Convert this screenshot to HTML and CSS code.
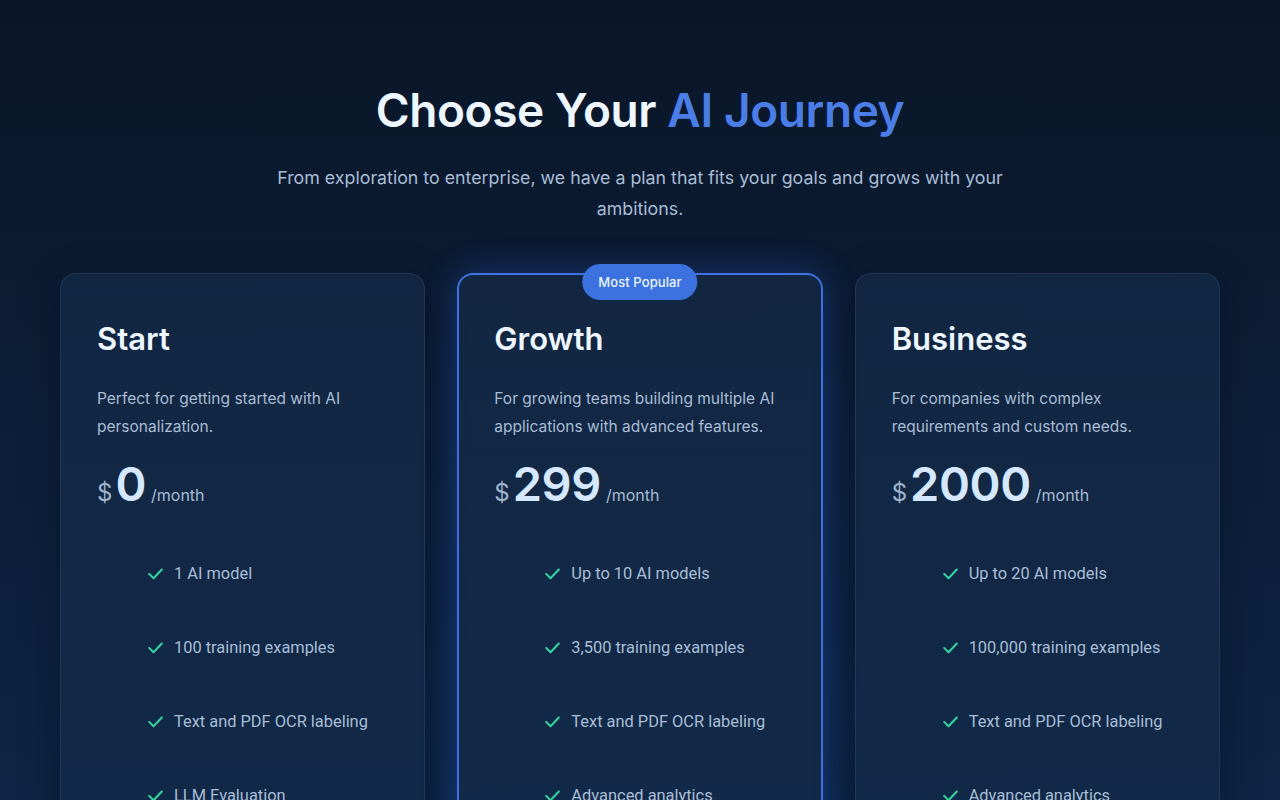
FILE: index.html
```html
<!DOCTYPE html>
<html lang="en">
<head>
<meta charset="utf-8">
<title>Pricing</title>
<link rel="stylesheet" href="styles.css">
</head>
<body>
<section class="pricing">
  <header class="intro">
    <h1 class="title">Choose Your <span class="accent">AI Journey</span></h1>
    <p class="subtitle">From exploration to enterprise, we have a plan that fits your goals and grows with your ambitions.</p>
  </header>
  <div class="plans">
    <article class="card">
      <h2 class="plan-name">Start</h2>
      <p class="plan-desc">Perfect for getting started with AI personalization.</p>
      <div class="price"><span class="cur">$</span><span class="amount">0</span><span class="per">/month</span></div>
      <ul class="features">
        <li><svg class="check" viewBox="0 0 24 24"><path d="M4 12.5l5.5 5.5L20 7"/></svg>1 AI model</li>
        <li><svg class="check" viewBox="0 0 24 24"><path d="M4 12.5l5.5 5.5L20 7"/></svg>100 training examples</li>
        <li><svg class="check" viewBox="0 0 24 24"><path d="M4 12.5l5.5 5.5L20 7"/></svg>Text and PDF OCR labeling</li>
        <li><svg class="check" viewBox="0 0 24 24"><path d="M4 12.5l5.5 5.5L20 7"/></svg>LLM Evaluation</li>
      </ul>
    </article>
    <article class="card featured">
      <span class="badge">Most Popular</span>
      <h2 class="plan-name">Growth</h2>
      <p class="plan-desc">For growing teams building multiple AI applications with advanced features.</p>
      <div class="price"><span class="cur">$</span><span class="amount">299</span><span class="per">/month</span></div>
      <ul class="features">
        <li><svg class="check" viewBox="0 0 24 24"><path d="M4 12.5l5.5 5.5L20 7"/></svg>Up to 10 AI models</li>
        <li><svg class="check" viewBox="0 0 24 24"><path d="M4 12.5l5.5 5.5L20 7"/></svg>3,500 training examples</li>
        <li><svg class="check" viewBox="0 0 24 24"><path d="M4 12.5l5.5 5.5L20 7"/></svg>Text and PDF OCR labeling</li>
        <li><svg class="check" viewBox="0 0 24 24"><path d="M4 12.5l5.5 5.5L20 7"/></svg>Advanced analytics</li>
      </ul>
    </article>
    <article class="card">
      <h2 class="plan-name">Business</h2>
      <p class="plan-desc">For companies with complex requirements and custom needs.</p>
      <div class="price"><span class="cur">$</span><span class="amount">2000</span><span class="per">/month</span></div>
      <ul class="features">
        <li><svg class="check" viewBox="0 0 24 24"><path d="M4 12.5l5.5 5.5L20 7"/></svg>Up to 20 AI models</li>
        <li><svg class="check" viewBox="0 0 24 24"><path d="M4 12.5l5.5 5.5L20 7"/></svg>100,000 training examples</li>
        <li><svg class="check" viewBox="0 0 24 24"><path d="M4 12.5l5.5 5.5L20 7"/></svg>Text and PDF OCR labeling</li>
        <li><svg class="check" viewBox="0 0 24 24"><path d="M4 12.5l5.5 5.5L20 7"/></svg>Advanced analytics</li>
      </ul>
    </article>
  </div>
</section>
</body>
</html>
```
FILE: styles.css
```css
* { box-sizing: border-box; }
html, body { margin: 0; padding: 0; }
body {
  min-height: 100vh;
  background: linear-gradient(180deg, #0a1628 0%, #0c1f3a 55%, #0d2546 100%);
  font-family: Inter, "Noto Sans", sans-serif;
  color: #eef6ff;
  overflow: hidden;
}
.pricing {
  width: 1160px;
  margin: 0 auto;
  padding-top: 80px;
}
.intro { text-align: center; }
.title {
  margin: 0;
  font-family: Inter, sans-serif;
  font-size: 46px;
  font-weight: 600;
  line-height: 60px;
  letter-spacing: -0.4px;
  color: #eef6ff;
}
.accent { color: #4a7ee6; }
.subtitle {
  margin: 22px auto 0;
  max-width: 740px;
  font-size: 17.8px;
  line-height: 31px;
  font-weight: 400;
  color: #a9bdd6;
}
.plans {
  margin-top: 49px;
  display: grid;
  grid-template-columns: repeat(3, 1fr);
  gap: 32px;
}
.card {
  position: relative;
  height: 600px;
  padding: 45px 36px 36px;
  border-radius: 16px;
  border: 1px solid rgba(148, 178, 220, 0.12);
  background: linear-gradient(180deg, rgba(24, 48, 78, 0.55), rgba(22, 46, 76, 0.55));
  box-shadow: 0 10px 40px rgba(0, 0, 0, 0.25);
}
.card.featured {
  border: 2px solid #3f72de;
  padding: 44px 35px 35px;
  box-shadow: 0 0 32px rgba(43, 98, 210, 0.4);
}
.badge {
  position: absolute;
  top: -11px;
  left: 50%;
  transform: translateX(-50%);
  height: 36px;
  padding: 0 16px;
  display: flex;
  align-items: center;
  border-radius: 18px;
  background: #3b72df;
  color: #eaf2ff;
  font-size: 13px;
  font-weight: 500;
  letter-spacing: 0.1px;
  white-space: nowrap;
}
.plan-name {
  margin: 0;
  font-size: 31px;
  font-weight: 600;
  line-height: 40px;
  color: #eef6ff;
}
.plan-desc {
  margin: 26px 0 0;
  font-size: 15.5px;
  line-height: 28px;
  color: #a9bdd6;
  max-width: 290px;
}
.price {
  margin-top: 11px;
  display: flex;
  align-items: baseline;
}
.cur {
  font-size: 24px;
  color: #9fb4cf;
  margin-right: 3px;
}
.amount {
  font-size: 47px;
  font-weight: 600;
  line-height: 64px;
  letter-spacing: -0.4px;
  color: #d6e8ff;
  margin-right: 5px;
}
.per {
  font-size: 16px;
  color: #a9bdd6;
}
.features {
  list-style: none;
  margin: 20px 0 0;
  padding: 0 0 0 49px;
}
.features li {
  display: flex;
  align-items: center;
  height: 74px;
  font-family: Roboto, sans-serif;
  font-size: 16.4px;
  color: #a9bed6;
}
.check {
  width: 19px;
  height: 19px;
  margin-right: 9px;
  fill: none;
  stroke: #34d3a0;
  stroke-width: 2.6;
  stroke-linecap: round;
  stroke-linejoin: round;
}
```
